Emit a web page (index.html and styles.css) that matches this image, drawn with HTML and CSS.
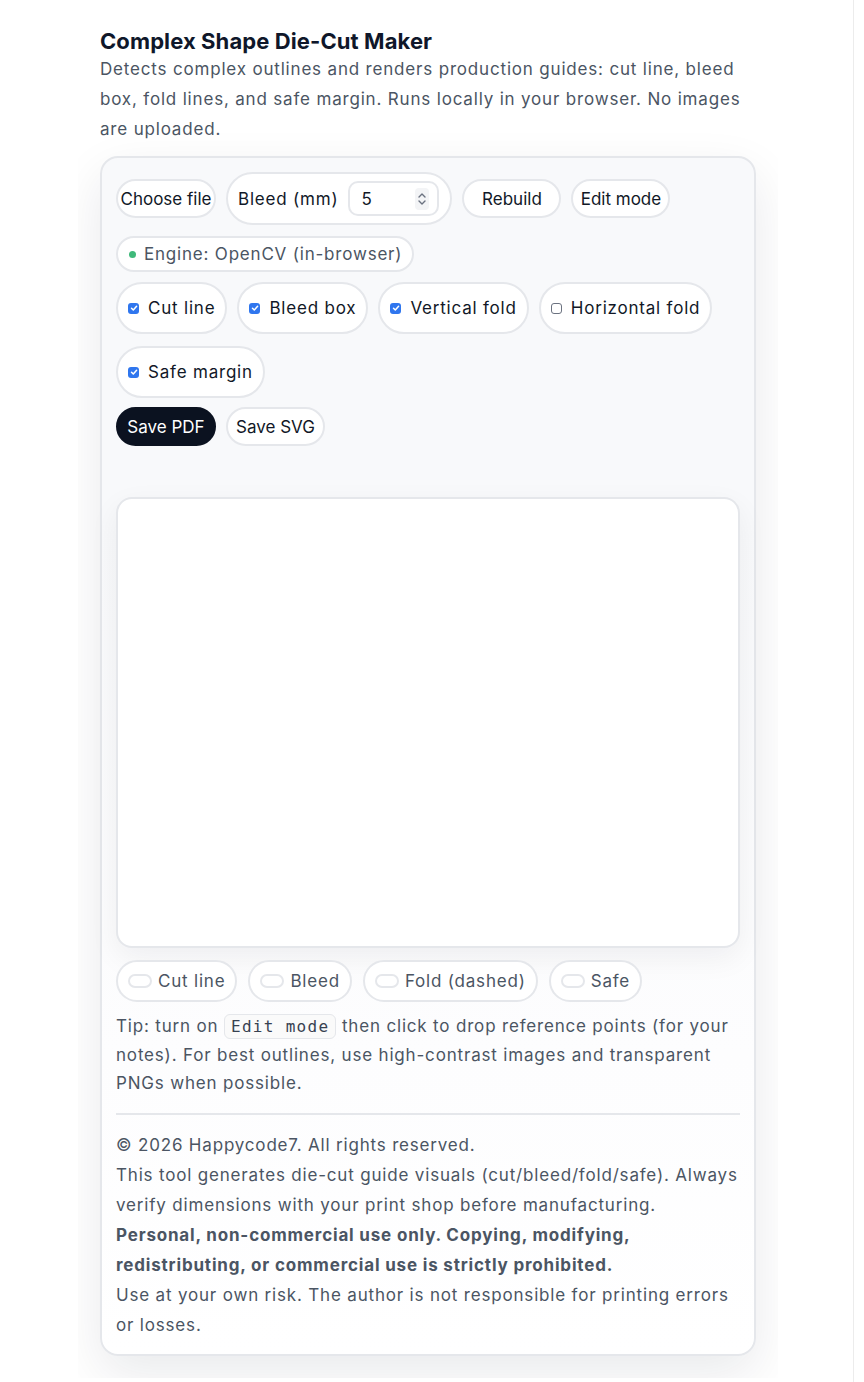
FILE: index.html
```html
<!DOCTYPE html>
<html lang="en">
<head>
<meta charset="utf-8">
<title>Complex Shape Die-Cut Maker</title>
<link rel="stylesheet" href="styles.css">
</head>
<body>
<div class="frame">
  <div class="wrap">
    <h1 class="title">Complex Shape Die-Cut Maker</h1>
    <p class="desc">Detects complex outlines and renders production guides: cut line, bleed box, fold lines, and safe margin. Runs locally in your browser. No images are uploaded.</p>

    <div class="card">
      <div class="row row-top">
        <button class="btn btn-file">Choose file</button>
        <label class="pill pill-bleed">
          <span class="bleed-label">Bleed (mm)</span>
          <span class="num">
            <span class="num-val">5</span>
            <span class="spin">
              <svg width="10" height="16" viewBox="0 0 10 16"><path d="M2 6 L5 3 L8 6" fill="none" stroke="#6b7280" stroke-width="1.4" stroke-linecap="round" stroke-linejoin="round"/><path d="M2 10 L5 13 L8 10" fill="none" stroke="#6b7280" stroke-width="1.4" stroke-linecap="round" stroke-linejoin="round"/></svg>
            </span>
          </span>
        </label>
        <button class="btn">Rebuild</button>
        <button class="btn">Edit mode</button>
      </div>

      <div class="row row-engine">
        <span class="pill pill-engine"><span class="dot"></span>Engine: OpenCV (in-browser)</span>
      </div>

      <div class="row row-checks">
        <label class="pill pill-check"><span class="cb on"><svg width="8" height="8" viewBox="0 0 8 8"><path d="M1.5 4.2 L3.3 6 L6.6 2.2" fill="none" stroke="#fff" stroke-width="1.5" stroke-linecap="round" stroke-linejoin="round"/></svg></span>Cut line</label>
        <label class="pill pill-check"><span class="cb on"><svg width="8" height="8" viewBox="0 0 8 8"><path d="M1.5 4.2 L3.3 6 L6.6 2.2" fill="none" stroke="#fff" stroke-width="1.5" stroke-linecap="round" stroke-linejoin="round"/></svg></span>Bleed box</label>
        <label class="pill pill-check"><span class="cb on"><svg width="8" height="8" viewBox="0 0 8 8"><path d="M1.5 4.2 L3.3 6 L6.6 2.2" fill="none" stroke="#fff" stroke-width="1.5" stroke-linecap="round" stroke-linejoin="round"/></svg></span>Vertical fold</label>
        <label class="pill pill-check"><span class="cb off"></span>Horizontal fold</label>
        <label class="pill pill-check"><span class="cb on"><svg width="8" height="8" viewBox="0 0 8 8"><path d="M1.5 4.2 L3.3 6 L6.6 2.2" fill="none" stroke="#fff" stroke-width="1.5" stroke-linecap="round" stroke-linejoin="round"/></svg></span>Safe margin</label>
      </div>

      <div class="row row-save">
        <button class="btn btn-dark">Save PDF</button>
        <button class="btn">Save SVG</button>
      </div>

      <div class="canvas"></div>

      <div class="row row-legend">
        <span class="pill pill-legend"><span class="sw"></span>Cut line</span>
        <span class="pill pill-legend"><span class="sw"></span>Bleed</span>
        <span class="pill pill-legend"><span class="sw"></span>Fold (dashed)</span>
        <span class="pill pill-legend"><span class="sw"></span>Safe</span>
      </div>

      <p class="tip">Tip: turn on <code class="kbd">Edit mode</code> then click to drop reference points (for your notes). For best outlines, use high-contrast images and transparent PNGs when possible.</p>

      <hr class="divider">

      <div class="foot">
        <p>© 2026 Happycode7. All rights reserved.</p>
        <p>This tool generates die-cut guide visuals (cut/bleed/fold/safe). Always verify dimensions with your print shop before manufacturing.</p>
        <p class="strong">Personal, non-commercial use only. Copying, modifying, redistributing, or commercial use is strictly prohibited.</p>
        <p>Use at your own risk. The author is not responsible for printing errors or losses.</p>
      </div>
    </div>
  </div>
</div>
</body>
</html>
```

FILE: styles.css
```css
* { box-sizing: border-box; }
html, body { margin: 0; padding: 0; background: #fff; }
body {
  font-family: Inter, "Noto Sans", "Liberation Sans", sans-serif;
  color: #111827;
}
.frame {
  width: 854px;
  min-height: 1382px;
  border-right: 1px solid #ececec;
}
.wrap {
  width: 700px;
  margin-left: 78px;
  padding: 28px 22px 22px;
  overflow: hidden;
  background: #fff;
}
.title {
  margin: 0;
  font-size: 22px;
  line-height: 26px;
  font-weight: 700;
  letter-spacing: 0.1px;
  color: #0f172a;
}
.desc {
  margin: 0;
  font-size: 17px;
  line-height: 30px;
  letter-spacing: 0.82px;
  color: #4b5563;
}
.card {
  margin-top: 12px;
  border: 2px solid #e5e7eb;
  border-radius: 18px;
  background: linear-gradient(#f8f9fb 0%, #f8f9fb 30%, #fdfdfe 75%, #fff 100%);
  padding: 14px 14px 14px;
  box-shadow: 0 18px 50px rgba(15, 23, 42, 0.09);
}
.row { display: flex; flex-wrap: wrap; align-items: center; gap: 10px; }
.row-top { height: 53px; }
.row-engine { margin-top: 11px; }
.row-checks { margin-top: 10px; row-gap: 12px; column-gap: 10px; }
.row-save { margin-top: 9px; }

.btn {
  height: 39px;
  min-width: 99px;
  padding: 0 2px;
  border: 2px solid #e5e7eb;
  border-radius: 999px;
  background: #fff;
  color: #111827;
  font-family: inherit;
  font-size: 17px;
  letter-spacing: normal;
  display: inline-flex;
  align-items: center;
  justify-content: center;
}
.btn-file { width: 100px; }
.btn-dark { background: #0b1220; border-color: #0b1220; color: #fff; min-width: 100px; }

.pill {
  display: inline-flex;
  align-items: center;
  border: 2px solid #e5e7eb;
  border-radius: 999px;
  background: #fff;
  font-size: 17px;
  letter-spacing: 0.8px;
  white-space: nowrap;
  flex-shrink: 0;
}
.pill-bleed {
  height: 53px;
  padding: 0 11px 0 10px;
  gap: 10px;
  color: #111827;
}
.bleed-label { white-space: nowrap; }
.num {
  flex-shrink: 0;
  width: 91px;
  height: 35px;
  border: 2px solid #e5e7eb;
  border-radius: 10px;
  display: flex;
  align-items: center;
  justify-content: space-between;
  padding: 0 8px 0 11px;
  background: #fff;
  letter-spacing: normal;
}
.spin {
  width: 14px;
  height: 22px;
  background: #f3f4f6;
  border-radius: 4px;
  display: flex;
  align-items: center;
  justify-content: center;
}
.pill-engine {
  height: 36px;
  padding: 0 10px 0 11px;
  color: #4b5563;
}
.dot {
  width: 7px; height: 7px;
  border-radius: 50%;
  background: #3fb97a;
  margin-right: 8px;
}
.pill-check {
  height: 52px;
  padding: 0 10px;
  color: #111827;
}
.cb {
  width: 11px; height: 11px;
  border-radius: 3px;
  margin-right: 9px;
  display: inline-flex;
  align-items: center;
  justify-content: center;
}
.cb.on { background: #2f76ee; }
.cb.off { border: 1.5px solid #6b7280; background: #fff; }

.canvas {
  margin-top: 51px;
  height: 451px;
  border: 2px solid #e5e7eb;
  border-radius: 16px;
  background: #fff;
  box-shadow: 0 10px 30px rgba(15, 23, 42, 0.06);
}
.row-legend { margin-top: 12px; column-gap: 11px; }
.pill-legend {
  height: 42px;
  padding: 0 10px;
  color: #4b5563;
}
.sw {
  width: 24px; height: 14px;
  border: 2px solid #e5e7eb;
  border-radius: 999px;
  margin-right: 6px;
}
.tip {
  margin: 10px 0 0;
  font-size: 17px;
  line-height: 28px;
  letter-spacing: 0.82px;
  color: #4b5563;
}
.kbd {
  font-family: "DejaVu Sans Mono", "Liberation Mono", monospace;
  font-size: 16px;
  letter-spacing: 1.3px;
  color: #374151;
  background: #fafafa;
  border: 1.5px solid #e5e7eb;
  border-radius: 6px;
  padding: 2px 6px;
}
.divider {
  margin: 16px 0 0;
  border: 0;
  height: 2px;
  background: #e5e7eb;
}
.foot { margin-top: 15px; }
.foot p {
  margin: 0;
  font-size: 17px;
  line-height: 30px;
  letter-spacing: 0.82px;
  color: #4b5563;
}
.foot .strong { font-weight: 700; color: #4b5563; }
```
